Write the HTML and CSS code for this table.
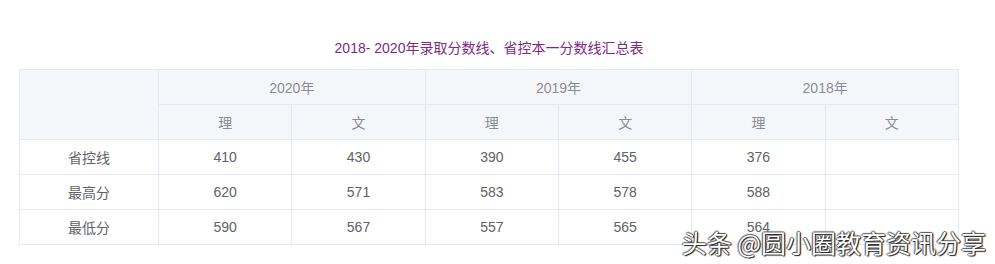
FILE: index.html
```html
<!DOCTYPE html>
<html lang="zh-cn">
<head>
    <meta charset="UTF-8">
    <meta name="viewport" content="width=device-width, initial-scale=1.0">
    <title>分数线汇总</title>
    <link rel="stylesheet" href="styles.css">
</head>
<body>
    <div class="wrap">
        <p class="caption">2018- 2020年录取分数线、省控本一分数线汇总表</p>
        <table class="score-table">
            <thead>
                <tr>
                    <th rowspan="2" class="first"></th>
                    <th colspan="2">2020年</th>
                    <th colspan="2">2019年</th>
                    <th colspan="2">2018年</th>
                </tr>
                <tr>
                    <th>理</th>
                    <th>文</th>
                    <th>理</th>
                    <th>文</th>
                    <th>理</th>
                    <th>文</th>
                </tr>
            </thead>
            <tbody>
                <tr>
                    <td>省控线</td>
                    <td>410</td>
                    <td>430</td>
                    <td>390</td>
                    <td>455</td>
                    <td>376</td>
                    <td></td>
                </tr>
                <tr>
                    <td>最高分</td>
                    <td>620</td>
                    <td>571</td>
                    <td>583</td>
                    <td>578</td>
                    <td>588</td>
                    <td></td>
                </tr>
                <tr>
                    <td>最低分</td>
                    <td>590</td>
                    <td>567</td>
                    <td>557</td>
                    <td>565</td>
                    <td>564</td>
                    <td></td>
                </tr>
            </tbody>
        </table>
    </div>
    <div class="watermark">头条 @圆小圈教育资讯分享</div>
</body>
</html>
```

FILE: styles.css
```css
body,
html {
    margin: 0;
    padding: 0;
    background: #fff;
}
body {
    font-family: "Liberation Sans", "Noto Sans CJK SC", sans-serif;
    position: relative;
    height: 264px;
    overflow: hidden;
}
.wrap {
    padding: 38px 0 0 19px;
    width: 940px;
}
.caption {
    margin: 0 0 11px 0;
    text-align: center;
    font-size: 14px;
    line-height: 20px;
    color: #7e2a82;
}
.score-table {
    border-collapse: collapse;
    table-layout: fixed;
    width: 940px;
    font-size: 14px;
    color: #606266;
}
.score-table th,
.score-table td {
    border: 1px solid #e6e8f2;
    height: 34px;
    padding: 0;
    text-align: center;
    font-weight: normal;
}
.score-table th {
    background-color: #f5f6fa;
    color: #8a8d94;
}
.score-table th.first {
    width: 138px;
}
/* 水印 */
.watermark {
    position: absolute;
    right: 9px;
    top: 225px;
    font-size: 25px;
    line-height: 34px;
    color: #fff;
    font-family: "Noto Sans CJK SC", sans-serif;
    text-shadow: 1px 1px 1px #222, -1px 0 1px #555, 0 -1px 1px #555, 1px 0 1px #333;
}
```
